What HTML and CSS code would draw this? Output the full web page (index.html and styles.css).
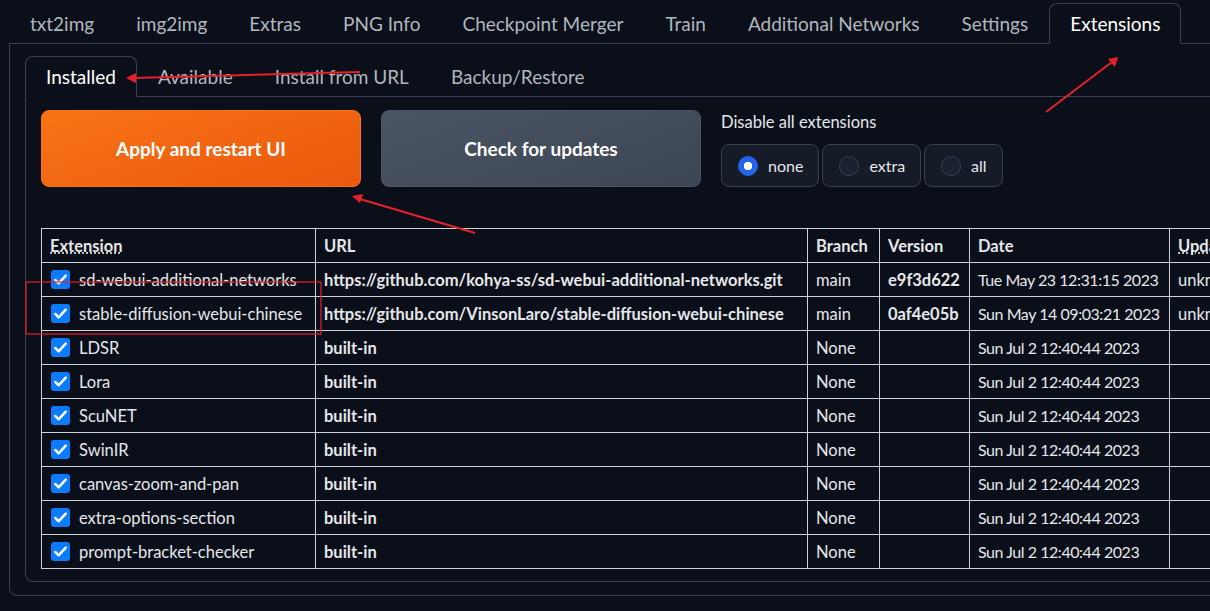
FILE: index.html
```html
<!DOCTYPE html>
<html lang="en">
<head>
    <meta charset="UTF-8">
    <title>Stable Diffusion - Extensions</title>
    <link rel="stylesheet" href="styles.css">
</head>
<body>
<div class="app">
    <nav class="tabs top-tabs">
        <button class="tab">txt2img</button>
        <button class="tab">img2img</button>
        <button class="tab">Extras</button>
        <button class="tab">PNG Info</button>
        <button class="tab">Checkpoint Merger</button>
        <button class="tab">Train</button>
        <button class="tab">Additional Networks</button>
        <button class="tab">Settings</button>
        <button class="tab selected">Extensions</button>
    </nav>
    <div class="panel outer">
        <nav class="tabs inner-tabs">
            <button class="tab selected">Installed</button>
            <button class="tab">Available</button>
            <button class="tab">Install from URL</button>
            <button class="tab">Backup/Restore</button>
        </nav>
        <div class="panel inner">
            <div class="controls">
                <button class="btn primary">Apply and restart UI</button>
                <button class="btn secondary">Check for updates</button>
                <div class="radio-block">
                    <span class="block-label">Disable all extensions</span>
                    <div class="radio-group">
                        <label class="radio-item"><span class="radio checked"></span>none</label>
                        <label class="radio-item"><span class="radio"></span>extra</label>
                        <label class="radio-item"><span class="radio"></span>all</label>
                    </div>
                </div>
            </div>

            <table class="ext-table">
                <colgroup>
                    <col class="c-name"><col class="c-url"><col class="c-branch"><col class="c-version"><col class="c-date"><col class="c-update">
                </colgroup>
                <thead>
                    <tr>
                        <th><abbr>Extension</abbr></th>
                        <th>URL</th>
                        <th>Branch</th>
                        <th>Version</th>
                        <th>Date</th>
                        <th><abbr>Update</abbr></th>
                    </tr>
                </thead>
                <tbody>
                    <tr>
                        <td><span class="check"></span>sd-webui-additional-networks</td>
                        <td class="bold">https://github.com/kohya-ss/sd-webui-additional-networks.git</td>
                        <td>main</td>
                        <td class="bold">e9f3d622</td>
                        <td class="date">Tue May 23 12:31:15 2023</td>
                        <td>unknown</td>
                    </tr>
                    <tr>
                        <td><span class="check"></span>stable-diffusion-webui-chinese</td>
                        <td class="bold">https://github.com/VinsonLaro/stable-diffusion-webui-chinese</td>
                        <td>main</td>
                        <td class="bold">0af4e05b</td>
                        <td class="date">Sun May 14 09:03:21 2023</td>
                        <td>unknown</td>
                    </tr>
                    <tr>
                        <td><span class="check"></span>LDSR</td>
                        <td class="bold">built-in</td>
                        <td>None</td><td></td>
                        <td class="date">Sun Jul 2 12:40:44 2023</td><td></td>
                    </tr>
                    <tr>
                        <td><span class="check"></span>Lora</td>
                        <td class="bold">built-in</td>
                        <td>None</td><td></td>
                        <td class="date">Sun Jul 2 12:40:44 2023</td><td></td>
                    </tr>
                    <tr>
                        <td><span class="check"></span>ScuNET</td>
                        <td class="bold">built-in</td>
                        <td>None</td><td></td>
                        <td class="date">Sun Jul 2 12:40:44 2023</td><td></td>
                    </tr>
                    <tr>
                        <td><span class="check"></span>SwinIR</td>
                        <td class="bold">built-in</td>
                        <td>None</td><td></td>
                        <td class="date">Sun Jul 2 12:40:44 2023</td><td></td>
                    </tr>
                    <tr>
                        <td><span class="check"></span>canvas-zoom-and-pan</td>
                        <td class="bold">built-in</td>
                        <td>None</td><td></td>
                        <td class="date">Sun Jul 2 12:40:44 2023</td><td></td>
                    </tr>
                    <tr>
                        <td><span class="check"></span>extra-options-section</td>
                        <td class="bold">built-in</td>
                        <td>None</td><td></td>
                        <td class="date">Sun Jul 2 12:40:44 2023</td><td></td>
                    </tr>
                    <tr>
                        <td><span class="check"></span>prompt-bracket-checker</td>
                        <td class="bold">built-in</td>
                        <td>None</td><td></td>
                        <td class="date">Sun Jul 2 12:40:44 2023</td><td></td>
                    </tr>
                </tbody>
            </table>
        </div>
    </div>

    <!-- red annotations drawn over the screenshot -->
    <svg class="annotations" width="1210" height="611" viewBox="0 0 1210 611">
        <g stroke="#e5222b" stroke-width="2" fill="none">
            <line x1="360" y1="72" x2="134" y2="78"/>
            <line x1="1046" y1="112" x2="1112" y2="62"/>
            <line x1="475" y1="233" x2="360" y2="199"/>
        </g>
        <g fill="#e5222b">
            <polygon points="126,78 136,73 136,83"/>
            <polygon points="1118,57 1115,67 1108,59"/>
            <polygon points="352,196 363,194 360,203"/>
        </g>
        <rect x="26" y="282" width="295" height="52" fill="none" stroke="#e5222b" stroke-width="1.2"/>
    </svg>
</div>
</body>
</html>
```

FILE: styles.css
```css
html, body {
    margin: 0;
    padding: 0;
    overflow: hidden;
}
body {
    background: #0b0f19;
    color: #e5e7eb;
    font-family: Lato, "Liberation Sans", sans-serif;
    font-size: 16px;
}
.app {
    position: relative;
    width: 1300px;
    padding: 3px 0 0 9px;
}
button {
    font-family: inherit;
}
.tabs {
    display: flex;
    border-bottom: 1px solid #374151;
}
.tab {
    height: 40px;
    padding: 0 20px;
    background: none;
    border: 1px solid transparent;
    border-bottom: none;
    color: #b1b6bf;
    font-size: 19px;
    cursor: pointer;
}
.tab.selected {
    color: #fff;
    background: #0b0f19;
    border: 1px solid #374151;
    border-bottom: 1px solid #0b0f19;
    border-radius: 8px 8px 0 0;
    margin-bottom: -1px;
    height: 41px;
}
.panel {
    border: 1px solid #374151;
    border-top: none;
    border-radius: 0 0 8px 8px;
}
.outer {
    padding: 12px 15px 13px 15px;
}
.inner {
    padding: 13px 15px 12px 15px;
}
.controls {
    display: flex;
    gap: 20px;
    align-items: flex-start;
}
.btn {
    width: 320px;
    height: 77px;
    border-radius: 8px;
    color: #fff;
    font-size: 19px;
    font-weight: bold;
}
.btn.primary {
    background: linear-gradient(160deg, #f97316, #ea580c);
    border: 1px solid #f97316;
}
.btn.secondary {
    background: linear-gradient(160deg, #4b5563, #3b4554);
    border: 1px solid #4b5563;
}
.radio-block {
    display: flex;
    flex-direction: column;
    padding-top: 2px;
}
.block-label {
    font-size: 16.5px;
    color: #e5e7eb;
    margin-bottom: 12px;
}
.radio-group {
    display: flex;
    gap: 3px;
}
.radio-item {
    display: flex;
    align-items: center;
    gap: 10px;
    height: 43px;
    box-sizing: border-box;
    padding: 0 15px 0 16px;
    background: #151b27;
    border: 1px solid #374151;
    border-radius: 8px;
    font-size: 16px;
}
.radio {
    width: 20px;
    height: 20px;
    box-sizing: border-box;
    border-radius: 50%;
    border: 1px solid #374151;
    background: #1a2130;
}
.radio.checked {
    border-color: #2563eb;
    background: radial-gradient(circle, #fff 0, #fff 4px, #2563eb 4.5px);
}
.ext-table {
    margin-top: 41px;
    border-collapse: collapse;
    table-layout: fixed;
    width: 1258px;
    font-size: 16.5px;
}
.c-name { width: 274px; }
.c-url { width: 492px; }
.c-branch { width: 72px; }
.c-version { width: 90px; }
.c-date { width: 200px; }
.c-update { width: 130px; }
.ext-table th,
.ext-table td {
    border: 1px solid #cfd2d6;
    height: 34px;
    box-sizing: border-box;
    padding: 0 8px;
    text-align: left;
    white-space: nowrap;
    overflow: hidden;
    color: #e5e7eb;
}
.ext-table th {
    font-weight: bold;
}
.ext-table abbr {
    text-decoration: underline dotted;
}
.ext-table .bold {
    font-weight: bold;
}
.ext-table .date {
    font-size: 16px;
    letter-spacing: -0.45px;
}
.check {
    display: inline-block;
    vertical-align: middle;
    width: 19px;
    height: 19px;
    margin: -3px 9px 0 1px;
    border-radius: 3px;
    background: #0b7cff url("data:image/svg+xml,%3Csvg xmlns='http://www.w3.org/2000/svg' viewBox='0 0 20 20'%3E%3Cpath d='M4.5 10.5l3.5 3.5 7.5-8' stroke='white' stroke-width='2.6' fill='none' stroke-linecap='round' stroke-linejoin='round'/%3E%3C/svg%3E") center/19px no-repeat;
}
.annotations {
    position: absolute;
    left: 0;
    top: 0;
    pointer-events: none;
}
```
